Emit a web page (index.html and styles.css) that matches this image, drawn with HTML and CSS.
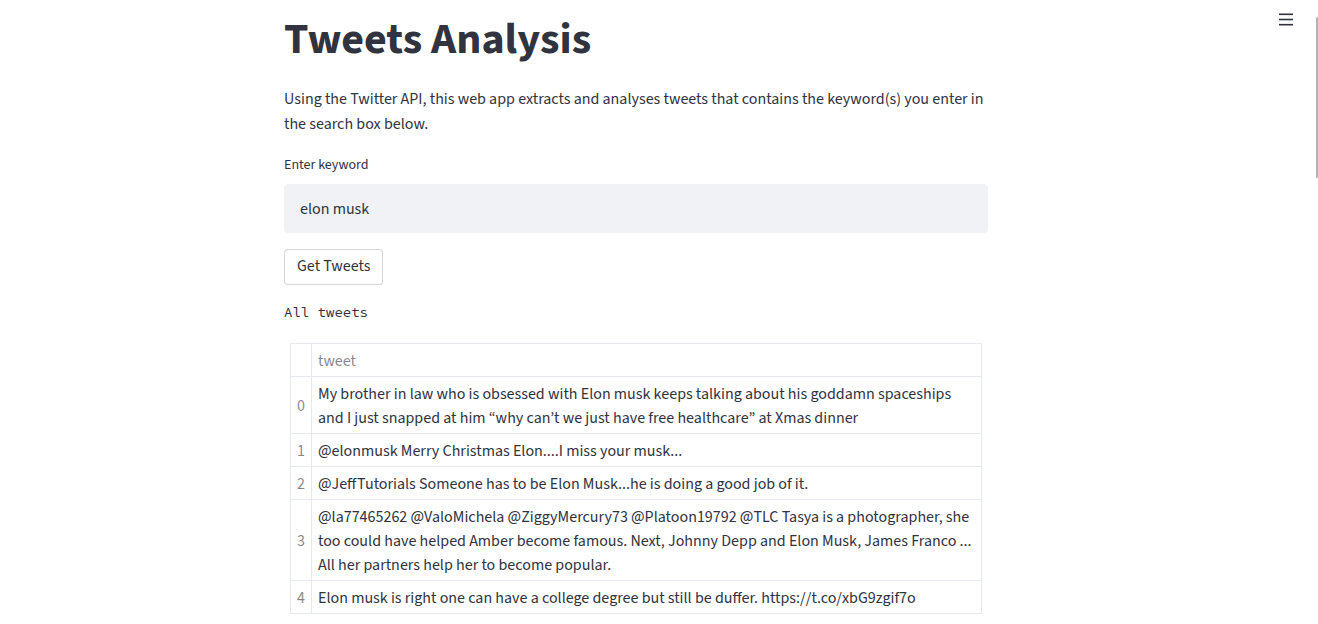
FILE: index.html
```html
<!DOCTYPE html>
<html lang="en">
<head>
<meta charset="utf-8">
<title>Tweets Analysis</title>
<link rel="stylesheet" href="styles.css">
</head>
<body>
<button class="menu-btn" aria-label="Menu">
  <svg width="14" height="13" viewBox="0 0 14 13"><rect x="0" y="0.5" width="14" height="1.6" fill="#31333F"/><rect x="0" y="5.7" width="14" height="1.6" fill="#31333F"/><rect x="0" y="10.9" width="14" height="1.6" fill="#31333F"/></svg>
</button>
<div class="scroll-thumb"></div>
<main class="block">
  <h1 class="title">Tweets Analysis</h1>
  <p class="intro">Using the Twitter API, this web app extracts and analyses tweets that contains the keyword(s) you enter in the search box below.</p>
  <div class="field">
    <label class="field-label" for="kw">Enter keyword</label>
    <div class="input-wrap"><input id="kw" class="text-input" type="text" value="elon musk"></div>
  </div>
  <div class="btn-row"><button class="btn">Get Tweets</button></div>
  <pre class="mono-text">All tweets</pre>
  <div class="frame">
    <table class="df">
      <thead>
        <tr><th class="idx"></th><th class="col">tweet</th></tr>
      </thead>
      <tbody>
        <tr><td class="idx">0</td><td class="cell">My brother in law who is obsessed with Elon musk keeps talking about his goddamn spaceships and I just snapped at him “why can’t we just have free healthcare” at Xmas dinner</td></tr>
        <tr><td class="idx">1</td><td class="cell">@elonmusk Merry Christmas Elon....I miss your musk...</td></tr>
        <tr><td class="idx">2</td><td class="cell">@JeffTutorials Someone has to be Elon Musk...he is doing a good job of it.</td></tr>
        <tr><td class="idx">3</td><td class="cell">@la77465262 @ValoMichela @ZiggyMercury73 @Platoon19792 @TLC Tasya is a photographer, she too could have helped Amber become famous. Next, Johnny Depp and Elon Musk, James Franco ... All her partners help her to become popular.</td></tr>
        <tr><td class="idx">4</td><td class="cell">Elon musk is right one can have a college degree but still be duffer. https://t.co/xbG9zgif7o</td></tr>
      </tbody>
    </table>
  </div>
</main>
</body>
</html>
```
FILE: styles.css
```css
* { box-sizing: border-box; }
html, body { margin: 0; padding: 0; background: #ffffff; }
body {
  font-family: "Source Sans 3", "Source Sans Pro", Lato, sans-serif;
  color: #31333F;
  overflow: hidden;
}
.block {
  width: 704px;
  margin-left: 284px;
  display: flex;
  flex-direction: column;
}
.title {
  margin: 0;
  padding: 14px 0 0;
  font-size: 44px;
  font-weight: 700;
  line-height: 52.8px;
  letter-spacing: 0;
}
.intro {
  margin: 20.7px 0 0;
  font-size: 16px;
  line-height: 25px;
}
.field { margin-top: 17px; display: flex; flex-direction: column; }
.field-label {
  font-size: 14px;
  line-height: 22.4px;
  height: 22.4px;
}
.input-wrap { margin-top: 7px; }
.text-input {
  display: block;
  width: 100%;
  height: 49.4px;
  border: none;
  border-radius: 4px;
  background: #F0F2F6;
  padding: 0 16px;
  font-family: inherit;
  font-size: 16px;
  color: #31333F;
  outline: none;
}
.btn-row { margin-top: 16px; display: flex; }
.btn {
  height: 36px;
  padding: 0 12px;
  background: #ffffff;
  border: 1px solid rgba(49, 51, 63, 0.2);
  border-radius: 4px;
  font-family: inherit;
  font-size: 16px;
  line-height: 1.6;
  color: #31333F;
  cursor: pointer;
}
.mono-text {
  margin: 16px 0 0;
  font-family: "Source Code Pro", "Liberation Mono", monospace;
  font-size: 14px;
  line-height: 22.4px;
  color: #31333F;
}
.frame { margin: 19px 6px 0; }
.df {
  width: 100%;
  border-collapse: collapse;
  font-size: 16px;
  line-height: 24px;
}
.df th, .df td {
  border: 1px solid #E6E9EF;
  padding: 5px 7px 3px 6px;
  vertical-align: middle;
  text-align: left;
}
.df th { font-weight: 400; color: rgba(49, 51, 63, 0.6); }
.df .idx {
  width: 21px;
  padding: 5px 0 3px;
  text-align: center;
  color: rgba(49, 51, 63, 0.6);
}
.df .cell { color: #31333F; }
.menu-btn {
  position: absolute;
  top: 13px;
  left: 1279px;
  padding: 0;
  border: none;
  background: none;
  display: flex;
}
.scroll-thumb {
  position: fixed;
  top: 17px;
  left: 1316px;
  width: 2px;
  height: 161px;
  background: #B3B3BA;
  border-radius: 1px;
}
```
